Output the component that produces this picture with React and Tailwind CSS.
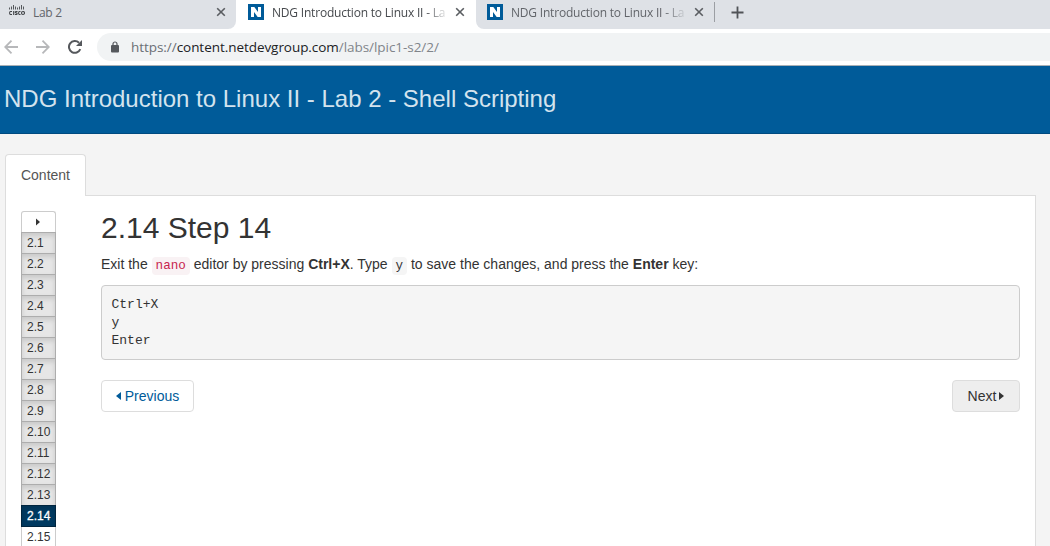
const steps = ['2.1', '2.2', '2.3', '2.4', '2.5', '2.6', '2.7', '2.8', '2.9', '2.10', '2.11', '2.12', '2.13'];

function Close() {
  return (
    <svg width="10" height="10" viewBox="0 0 10 10" className="shrink-0" stroke="#5a5d61" strokeWidth="1.6" fill="none">
      <path d="M1.2 1.2 8.8 8.8M8.8 1.2 1.2 8.8" />
    </svg>
  );
}

function NdgIcon() {
  return (
    <svg width="16" height="16" viewBox="0 0 16 16" className="shrink-0">
      <rect width="16" height="16" fill="#005b99" />
      <path d="M3 3h3.300l3.700 5V3h3v10H9.700L6 8v5H3z" fill="#fff" />
    </svg>
  );
}

function CiscoIcon() {
  return (
    <svg width="16" height="12" viewBox="0 0 16 12" className="shrink-0" fill="none" stroke="#55585c">
      <path d="M.5 3.500v2M2.500 2.500v3M4.500 1v4.500M6.500 2.500v3M8.500 3.500v2M10.500 2.500v3M12.500 1v4.500M14.500 2.500v3" strokeWidth="1" />
      <path d="M3 7.500H1.500Q.6 7.500.6 9T1.500 10.500H3M4.700 7v4M8.500 7.500H7Q6.200 7.600 6.400 8.500L8 9.200Q8.500 10.300 7.500 10.500H6M11.500 7.500H10.500Q9.600 7.500 9.600 9T10.500 10.500H11.500" strokeWidth="1.1" stroke="#3f4245" />
      <circle cx="14" cy="9" r="1.500" strokeWidth="1.100" stroke="#3f4245" />
    </svg>
  );
}

function NdgTitle({ dim }) {
  return (
    <span className={`w-[173px] shrink-0 whitespace-nowrap pt-[0.5px] tracking-[-0.2px] [mask-image:linear-gradient(to_right,#000_153px,transparent_177px)] ${dim ? 'text-[#62656a]' : 'text-[#46494d]'}`}>
      NDG Introduction to Linux II - La
    </span>
  );
}

export default function App() {
  return (
    <div className="flex h-[546px] w-[1050px] flex-col overflow-hidden bg-[#f4f4f4] font-['Liberation_Sans',Arial,sans-serif] text-sm text-[#333]">
      <div className="flex h-[29px] shrink-0 bg-white font-['Open_Sans','Noto_Sans',sans-serif] text-[12px] leading-4">
        <div className="flex w-[236px] shrink-0 items-start rounded-br-lg bg-[#dee1e6] pl-[9px] pt-1">
          <CiscoIcon />
          <span className="ml-2 flex-1 pt-[0.5px] tracking-[-0.3px] text-[#62656a]">Lab 2</span>
          <span className="mr-[10px] pt-[3px]"><Close /></span>
        </div>
        <div className="flex w-[240px] shrink-0 items-start pl-3 pt-1">
          <NdgIcon />
          <span className="w-2 shrink-0" />
          <NdgTitle />
          <span className="ml-[10px] pt-[3px]"><Close /></span>
        </div>
        <div className="flex flex-1 items-start rounded-bl-lg bg-[#dee1e6] pl-[11px] pt-1">
          <NdgIcon />
          <span className="w-2 shrink-0" />
          <NdgTitle dim />
          <span className="ml-[10px] pt-[3px]"><Close /></span>
          <span className="-mt-[2px] ml-[10px] h-5 w-px bg-[#9b9ea3]" />
          <svg width="13" height="13" viewBox="0 0 13 13" className="ml-4 mt-[2px]" stroke="#505357" strokeWidth="1.8">
            <path d="M6.500 .5v12M.5 6.500h12" />
          </svg>
        </div>
      </div>
      <div className="flex h-9 shrink-0 items-center bg-white pl-1">
        <svg width="14" height="14" viewBox="0 0 14 14" fill="none" stroke="#b7b8ba" strokeWidth="1.8">
          <path d="M14 7H1.500M7.500.7 1.200 7l6.300 6.300" />
        </svg>
        <svg width="14" height="14" viewBox="0 0 14 14" className="ml-[18px]" fill="none" stroke="#b7b8ba" strokeWidth="1.8">
          <path d="M0 7h12.500M6.500.7 12.800 7l-6.300 6.300" />
        </svg>
        <svg width="14" height="14" viewBox="0 0 14 14" className="ml-[18px]">
          <path d="M12.300 9.200A5.900 5.900 0 1 1 11 2.700" fill="none" stroke="#55585c" strokeWidth="2" />
          <path d="M14 0v6H8z" fill="#55585c" />
        </svg>
        <div className="ml-[15px] flex h-7 flex-1 items-center rounded-l-full bg-[#f1f3f4] pl-[14px]">
          <svg width="8" height="12" viewBox="0 0 8 12">
            <path d="M2 5V3a2 2 0 0 1 4 0v2" fill="none" stroke="#55585c" strokeWidth="1.200" />
            <rect y="4" width="8" height="7.500" rx="1" fill="#55585c" />
          </svg>
          <span className="ml-3 mt-px whitespace-nowrap font-['Open_Sans','Noto_Sans',sans-serif] text-[13.500px] tracking-[-0.05px] text-[#202124]">
            <span className="text-[#6b6f74]">https://</span>content.netdevgroup.com<span className="text-[#80848a]">/labs/lpic1-s2/2/</span>
          </span>
        </div>
      </div>
      <header className="flex h-[69px] shrink-0 items-center border-b border-t border-b-[#004a80] border-t-[#a9b0b6] bg-[#005b99] pb-[2px] pl-1">
        <h1 className="whitespace-nowrap text-[24px] leading-none text-[#d3e3ee]">NDG Introduction to Linux II - Lab 2 - Shell Scripting</h1>
      </header>
      <div className="flex min-h-0 flex-1 flex-col pl-[5px] pr-[14px] pt-5">
        <div className="z-10 -mb-px flex h-[42px] w-[81px] shrink-0 items-center justify-center rounded-t border border-b-0 border-[#ddd] bg-white pb-[2px] text-[#555]">Content</div>
        <main className="flex min-h-0 flex-1 items-start border border-b-0 border-[#ddd] bg-white pl-[15px] pr-[15px] pt-[15px]">
          <nav className="w-[35px] shrink-0 text-[12px] leading-5">
            <div className="flex h-[21px] items-center justify-center rounded-t-[3px] border border-b-0 border-[#ccc] pr-px">
              <svg width="4" height="8" viewBox="0 0 4 8"><path d="M0 .5 4 4 0 7.500z" fill="#333" /></svg>
            </div>
            {steps.map((s) => (
              <div key={s} className="h-[21px] border border-b-0 border-[#adadad] bg-[#e6e6e6] pl-[5px] shadow-[inset_0_3px_5px_rgba(0,0,0,0.125)]">{s}</div>
            ))}
            <div className="h-[22px] border border-[#00253f] bg-[#003a61] pl-[5px] text-white shadow-[inset_0_3px_5px_rgba(0,0,0,0.125)] [-webkit-text-stroke:0.3px_#fff]">2.14</div>
            <div className="h-[21px] border-x border-[#ccc] pl-[5px]">2.15</div>
          </nav>
          <section className="ml-[45px] min-w-0 flex-1">
            <h2 className="text-[30px] leading-[33px]">2.14 Step 14</h2>
            <p className="mt-[10px] h-5 whitespace-nowrap leading-5">
              Exit the <code className="rounded bg-[#f9f2f4] px-1 py-[2px] font-['Liberation_Mono',monospace] text-[12.600px] text-[#c7254e]">nano</code> editor by pressing <b>Ctrl+X</b>. Type <code className="rounded bg-[#f5f5f5] px-1 py-[2px] font-['Liberation_Mono',monospace] text-[12.600px]">y</code> to save the changes, and press the <b>Enter</b> key:
            </p>
            <pre className="mt-[11px] h-[75px] rounded border border-[#ccc] bg-[#f5f5f5] px-[9.500px] py-[10px] font-['Liberation_Mono',monospace] text-[13px] leading-[18px]">{'Ctrl+X\ny\nEnter'}</pre>
            <div className="mt-5 flex justify-between leading-[30px]">
              <button className="flex h-8 w-[93px] items-center justify-center gap-1 rounded border border-[#ddd] bg-white text-[#005b99]">
                <svg width="5" height="8" viewBox="0 0 5 8"><path d="M5 0v8L0 4z" fill="currentColor" /></svg>
                Previous
              </button>
              <button className="flex h-8 w-[68px] items-center justify-center gap-[3px] rounded border border-[#ddd] bg-[#eee]">
                Next
                <svg width="5" height="8" viewBox="0 0 5 8"><path d="M0 0v8l5-4z" fill="currentColor" /></svg>
              </button>
            </div>
          </section>
        </main>
      </div>
    </div>
  );
}
